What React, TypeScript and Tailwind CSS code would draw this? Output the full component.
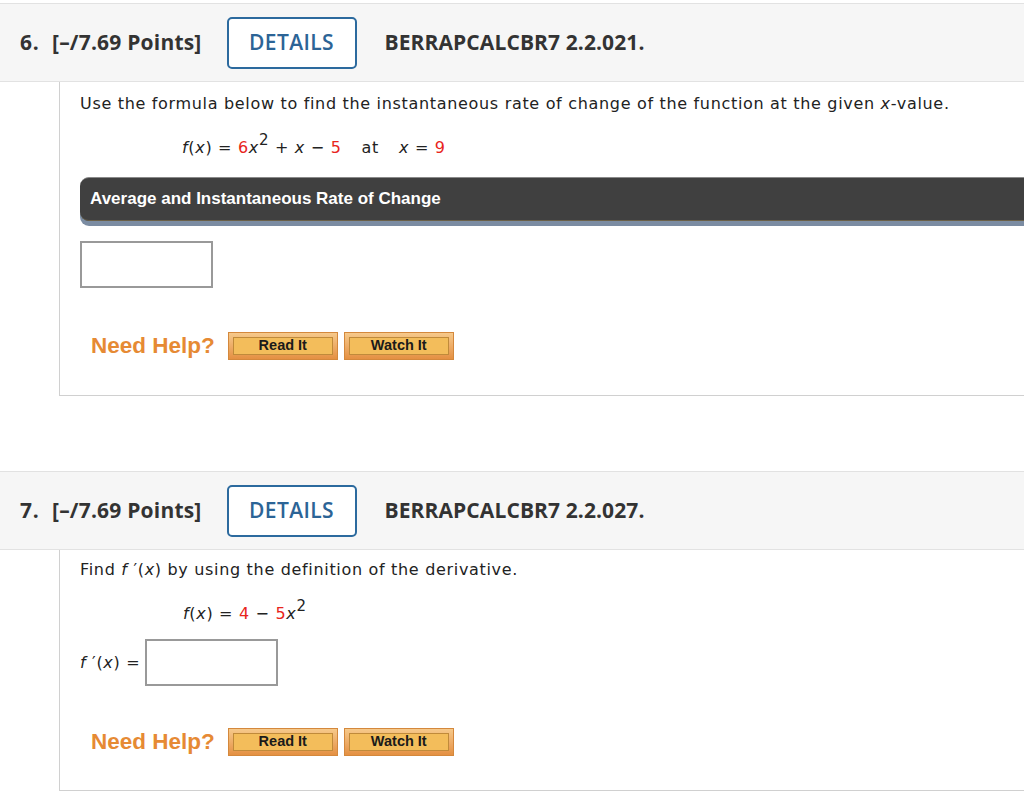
import React from "react";

// Two homework questions, each with a grey header strip and a bordered body.

const body = { fontFamily: '"DejaVu Sans", Verdana, sans-serif' };
const head = { fontFamily: '"Open Sans", "DejaVu Sans", sans-serif' };
const arial = { fontFamily: '"Liberation Sans", Arial, sans-serif' };

function Red({ children }: { children: React.ReactNode }) {
    return <span className="text-[#e8241c]">{children}</span>;
}

function Sq() {
    return <sup className="text-[15px] relative -top-[8px]">2</sup>;
}

function Header({ num, code }: { num: number; code: string }) {
    return (
        <div
            className="flex items-center h-[79px] bg-[#f6f6f6] border-t border-b border-[#e2e2e2] text-[#333] text-[21px] font-bold"
            style={head}
        >
            <span className="ml-[20px] w-[32px]">{num}.</span>
            <span className="tracking-[0.2px]">[–/7.69 Points]</span>
            <button
                className="ml-[25px] w-[130px] h-[52px] border-2 border-[#2c6a9e] rounded-[5px] bg-white text-[#2c6496] text-[21px] font-semibold tracking-[0.4px]"
                style={head}
            >
                DETAILS
            </button>
            <span className="ml-[28px] text-[21px] tracking-[0.1px]">{code}</span>
        </div>
    );
}

function HelpButton({ label }: { label: string }) {
    return (
        <div className="w-[110px] h-[28px] p-[4px] bg-gradient-to-b from-[#f6c98a] to-[#e49042] border border-[#d4883c]">
            <div
                className="h-full flex items-center justify-center bg-[#f3bd5b] border border-[#c08a3a] text-[#1a1a1a] text-[14.5px] font-bold"
                style={arial}
            >
                {label}
            </div>
        </div>
    );
}

function NeedHelp() {
    return (
        <div className="flex items-center pl-[11px]">
            <span className="text-[#e68a34] text-[22.5px] font-bold mr-[13px]" style={arial}>
                Need Help?
            </span>
            <div className="flex gap-[6px]">
                <HelpButton label="Read It" />
                <HelpButton label="Watch It" />
            </div>
        </div>
    );
}

function Box({ className = "" }: { className?: string }) {
    return <div className={`w-[133px] h-[47px] border-2 border-[#999] bg-white ${className}`} />;
}

export default function App() {
    return (
        <div className="w-[1024px] h-[799px] bg-white overflow-hidden text-[#222] text-[16px] tracking-[0.68px]" style={body}>
            {/* question 6 */}
            <div className="pt-[3px]">
                <Header num={6} code="BERRAPCALCBR7 2.2.021." />
                <div className="ml-[59px] h-[314px] border-l border-b border-[#d0d0d0] pl-[20px] pt-[11px]">
                    <p className="leading-[22px]">
                        Use the formula below to find the instantaneous rate of change of the function at the given <i>x</i>-value.
                    </p>
                    <p className="leading-[22px] mt-[22px] ml-[102px]">
                        <i>f</i>(<i>x</i>) = <Red>6</Red><i>x</i>
                        <Sq /> + <i>x</i> − <Red>5</Red>
                        <span className="ml-[20px]">at</span>
                        <span className="ml-[20px]">
                            <i>x</i> = <Red>9</Red>
                        </span>
                    </p>
                    <div className="mt-[18px] rounded-l-[9px] border-t border-[#8a8a8a] bg-[#404040] shadow-[0_5px_0_#7b8ca2]">
                        <div
                            className="h-[43px] flex items-center pl-[10px] text-white text-[17px] font-bold tracking-normal border-b border-[#6a6048] rounded-bl-[9px]"
                            style={arial}
                        >
                            Average and Instantaneous Rate of Change
                        </div>
                    </div>
                    <Box className="mt-[20px]" />
                    <div className="mt-[41px] tracking-normal">
                        <NeedHelp />
                    </div>
                </div>
            </div>

            {/* question 7 */}
            <div className="mt-[75px]">
                <Header num={7} code="BERRAPCALCBR7 2.2.027." />
                <div className="ml-[59px] h-[241px] border-l border-b border-[#d0d0d0] pl-[20px] pt-[9px]">
                    <p className="leading-[22px]">
                        Find <i>f</i> ′(<i>x</i>) by using the definition of the derivative.
                    </p>
                    <p className="leading-[22px] mt-[22px] ml-[103px]">
                        <i>f</i>(<i>x</i>) = <Red>4</Red> − <Red>5</Red><i>x</i>
                        <Sq />
                    </p>
                    <div className="flex items-center mt-[14px]">
                        <span>
                            <i>f</i> ′(<i>x</i>) =
                        </span>
                        <Box className="ml-[5px]" />
                    </div>
                    <div className="mt-[39px] tracking-normal">
                        <NeedHelp />
                    </div>
                </div>
            </div>
        </div>
    );
}
